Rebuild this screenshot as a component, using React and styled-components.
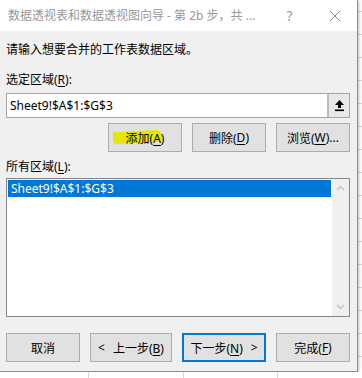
import styled, { createGlobalStyle } from 'styled-components'

// GLOBAL
const GlobalStyle = createGlobalStyle`
  body {
    margin: 0;
    background-color: #fff;
    background-image:
      repeating-linear-gradient(to bottom, transparent 0 11px, #d8d8d8 11px 12px, transparent 12px 23px),
      repeating-linear-gradient(to right, transparent 0 88px, #d8d8d8 88px 89px, transparent 89px 94.5px);
    font-family: "Noto Sans", "Noto Sans CJK SC", sans-serif;
    font-size: 12px;
  }
`

// STYLES
const Dialog = styled.div`
  width: 357px;
  height: 371px;
  display: flex;
  flex-direction: column;
  background: #f0f0f0;
  border-right: 1px solid #8c8c8c;
  border-bottom: 1px solid #8c8c8c;
  box-shadow: 1px 1px 3px rgba(0, 0, 0, 0.25);
  color: #000;
`

const TitleBar = styled.div`
  height: 31px;
  flex: none;
  display: flex;
  align-items: center;
  background: #fff;
  padding-left: 8px;
  color: #999;
`

const TitleText = styled.div`
  flex: 1;
  white-space: nowrap;
  line-height: 16px;
`

const TitleButton = styled.div`
  width: 45px;
  height: 31px;
  display: flex;
  align-items: center;
  justify-content: center;
  color: #999;
  font-size: 14px;
`

const Body = styled.div`
  display: flex;
  flex-direction: column;
  padding: 0 7px 0 6px;
`

const Text = styled.div`
  line-height: 16px;
  margin-top: ${p => p.top}px;
  white-space: nowrap;
`

const Key = styled.span`
  text-decoration: underline;
  text-underline-offset: 2px;
`

const InputBox = styled.div`
  margin-top: 5px;
  height: 25px;
  box-sizing: border-box;
  display: flex;
  background: #fff;
  border: 1px solid #a5a5a5;
`

const InputText = styled.div`
  flex: 1;
  padding-left: 3px;
  line-height: 23px;
`

const PickButton = styled.div`
  width: 20px;
  display: flex;
  align-items: center;
  justify-content: center;
  background: #e8e8e8;
  border-left: 2px solid #bdbdbd;
`

const ButtonRow = styled.div`
  margin-top: ${p => p.top}px;
  display: grid;
  grid-template-columns: ${p => p.cols};
  justify-content: ${p => p.justify || 'start'};
  gap: 10px;
`

const Button = styled.div`
  position: relative;
  height: 29px;
  box-sizing: border-box;
  display: flex;
  align-items: center;
  justify-content: center;
  gap: ${p => p.gap || 0}px;
  background: #e1e1e1;
  border: ${p => (p.primary ? '2px solid #0078d7' : '1px solid #adadad')};
  white-space: nowrap;
`

const Label = styled.span`
  position: relative;
  z-index: 1;
`

const Highlight = styled.span`
  position: absolute;
  left: 4px;
  top: 7px;
  width: 49px;
  height: 12px;
  background: #e6e600;
  transform: rotate(-3deg);
  border-radius: 2px 6px 2px 4px;
`

const ListBox = styled.div`
  margin-top: 3px;
  height: 139px;
  box-sizing: border-box;
  display: flex;
  background: #fff;
  border: 1px solid #828790;
`

const ListItems = styled.div`
  flex: 1;
  padding: 1px;
`

const ListItem = styled.div`
  height: 17px;
  line-height: 17px;
  padding-left: 3px;
  background: ${p => (p.selected ? '#0078d7' : 'transparent')};
  color: ${p => (p.selected ? '#fff' : '#000')};
`

const ScrollBar = styled.div`
  width: 17px;
  display: flex;
  flex-direction: column;
  justify-content: space-between;
  align-items: center;
  background: #f0f0f0;
  padding: 6px 0;
`

// ICONS
const UpArrow = () => (
  <svg width="11" height="13" viewBox="0 0 11 13">
    <path d="M5.5 1 L10 6 H7 V9 H4 V6 H1 Z" fill="#000" />
    <rect x="1" y="10.5" width="9" height="1.6" fill="#000" />
  </svg>
)

const Chevron = ({ up }) => (
  <svg width="9" height="6" viewBox="0 0 9 6">
    <path d={up ? 'M1 5 L4.5 1.5 L8 5' : 'M1 1 L4.5 4.5 L8 1'} fill="none" stroke="#c2c2c2" strokeWidth="1.4" />
  </svg>
)

const CloseIcon = () => (
  <svg width="12" height="12" viewBox="0 0 12 12">
    <path d="M1 1 L11 11 M11 1 L1 11" stroke="#8a8a8a" strokeWidth="1" />
  </svg>
)

// MAIN COMPONENT
export default function App() {
  return (
    <>
      <GlobalStyle />
      <Dialog>
        <TitleBar>
          <TitleText>数据透视表和数据透视图向导 - 第 2b 步，共 ...</TitleText>
          <TitleButton>?</TitleButton>
          <TitleButton><CloseIcon /></TitleButton>
        </TitleBar>

        <Body>
          <Text top={11}>请输入想要合并的工作表数据区域。</Text>
          <Text top={14}>选定区域(<Key>R</Key>):</Text>

          <InputBox>
            <InputText>Sheet9!$A$1:$G$3</InputText>
            <PickButton><UpArrow /></PickButton>
          </InputBox>

          <ButtonRow top={5} cols="74px 74px 74px" justify="end">
            <Button>
              <Highlight />
              <Label>添加(<Key>A</Key>)</Label>
            </Button>
            <Button>删除(<Key>D</Key>)</Button>
            <Button>浏览(<Key>W</Key>)...</Button>
          </ButtonRow>

          <Text top={7}>所有区域(<Key>L</Key>):</Text>

          <ListBox>
            <ListItems>
              <ListItem selected>Sheet9!$A$1:$G$3</ListItem>
            </ListItems>
            <ScrollBar>
              <Chevron up />
              <Chevron />
            </ScrollBar>
          </ListBox>

          <ButtonRow top={16} cols="74px 82px 84px 74px">
            <Button>取消</Button>
            <Button gap={8}><span>&lt;</span><span>上一步(<Key>B</Key>)</span></Button>
            <Button primary gap={8}><span>下一步(<Key>N</Key>)</span><span>&gt;</span></Button>
            <Button>完成(<Key>F</Key>)</Button>
          </ButtonRow>
        </Body>
      </Dialog>
    </>
  )
}
